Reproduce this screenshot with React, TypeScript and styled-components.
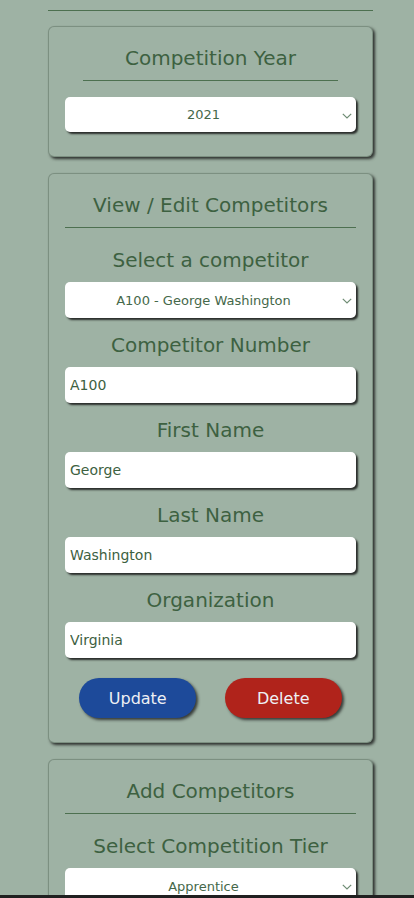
import React from "react";
import styled, { createGlobalStyle } from "styled-components";

const GlobalStyle = createGlobalStyle`
  html, body {
    margin: 0;
    padding: 0;
    background: #9eb2a4;
  }
  body {
    font-family: "DejaVu Sans", "Liberation Sans", sans-serif;
    color: #3d6141;
  }
  * { box-sizing: border-box; }
`;

const Page = styled.div`
  padding: 10px 41px 40px 48px;
`;

const TopRule = styled.div`
  height: 1px;
  background: #4d7050;
`;

const CardStack = styled.div`
  margin-top: 15px;
  display: flex;
  flex-direction: column;
  gap: 16px;
`;

const Card = styled.section`
  display: flex;
  flex-direction: column;
  align-items: stretch;
  padding: 0 16px 24px;
  border: 1px solid rgba(60, 80, 66, 0.35);
  border-radius: 6px;
  box-shadow: 2px 2px 3px rgba(20, 20, 20, 0.8);
  background: #9eb2a4;
`;

const CardTitle = styled.h2<{ $inset?: number }>`
  margin: 19px ${(p) => p.$inset ?? 0}px 16px;
  padding-bottom: 10px;
  border-bottom: 1px solid #4d7050;
  font-weight: 400;
  font-size: 20px;
  line-height: 24px;
  text-align: center;
  color: #3d6141;
`;

const FieldLabel = styled.label`
  display: block;
  margin: 4px 0 10px;
  font-size: 20px;
  line-height: 24px;
  text-align: center;
  color: #3d6141;
`;

const Field = styled.div`
  display: flex;
  flex-direction: column;
  margin-bottom: 11px;
`;

const SelectWrap = styled.div`
  position: relative;
  width: 100%;
`;

const Select = styled.select<{ $h: number }>`
  appearance: none;
  -webkit-appearance: none;
  display: block;
  height: ${(p) => p.$h}px;
  width: 100%;
  border: none;
  border-radius: 5px;
  background: #ffffff;
  box-shadow: 2px 2px 2px rgba(20, 20, 20, 0.85);
  font-family: inherit;
  font-size: 13px;
  color: #45684a;
  text-align: center;
  text-align-last: center;
  padding: 0 14px 0 0;
  outline: none;
`;

const Chevron = styled.svg`
  position: absolute;
  right: 4px;
  top: 50%;
  width: 10px;
  height: 6px;
  margin-top: -2px;
  pointer-events: none;
`;

const TextInput = styled.input`
  display: block;
  height: 36px;
  width: 100%;
  border: none;
  border-radius: 5px;
  background: #ffffff;
  box-shadow: 2px 2px 2px rgba(20, 20, 20, 0.85);
  font-family: inherit;
  font-size: 14px;
  color: #3d6141;
  padding: 0 5px;
  outline: none;
`;

const ButtonRow = styled.div`
  display: flex;
  justify-content: space-around;
  margin-top: 9px;
`;

const PillButton = styled.button<{ $tone: "blue" | "red" }>`
  width: 117px;
  height: 40px;
  border: none;
  border-radius: 20px;
  background: ${(p) => (p.$tone === "blue" ? "#1d4a9a" : "#b0231b")};
  color: #eef0f4;
  font-family: inherit;
  font-size: 16px;
  box-shadow: 2px 2px 3px rgba(20, 20, 20, 0.75);
  cursor: pointer;
`;

const BottomBar = styled.div`
  position: fixed;
  left: 0;
  right: 0;
  bottom: 0;
  height: 3px;
  background: #202020;
`;

const fields = [
  { label: "Competitor Number", value: "A100" },
  { label: "First Name", value: "George" },
  { label: "Last Name", value: "Washington" },
  { label: "Organization", value: "Virginia" },
];

function Dropdown({
  value,
  options,
  height = 36,
}: {
  value: string;
  options: string[];
  height?: number;
}) {
  return (
    <SelectWrap>
      <Select defaultValue={value} $h={height}>
        {options.map((o) => (
          <option key={o} value={o}>
            {o}
          </option>
        ))}
      </Select>
      <Chevron viewBox="0 0 10 6" aria-hidden="true">
        <path d="M0.8 0.8 L5 5 L9.2 0.8" fill="none" stroke="#6f8c74" strokeWidth="1.2" />
      </Chevron>
    </SelectWrap>
  );
}

export default function App() {
  return (
    <>
      <GlobalStyle />
      <Page>
        <TopRule />
        <CardStack>
          <Card>
            <CardTitle $inset={18}>Competition Year</CardTitle>
            <Dropdown value="2021" options={["2021", "2022"]} height={35} />
          </Card>

          <Card>
            <CardTitle>View / Edit Competitors</CardTitle>
            <Field>
              <FieldLabel>Select a competitor</FieldLabel>
              <Dropdown value="A100 - George Washington" options={["A100 - George Washington"]} />
            </Field>
            {fields.map((f) => (
              <Field key={f.label}>
                <FieldLabel>{f.label}</FieldLabel>
                <TextInput defaultValue={f.value} />
              </Field>
            ))}
            <ButtonRow>
              <PillButton $tone="blue">Update</PillButton>
              <PillButton $tone="red">Delete</PillButton>
            </ButtonRow>
          </Card>

          <Card>
            <CardTitle>Add Competitors</CardTitle>
            <Field>
              <FieldLabel>Select Competition Tier</FieldLabel>
              <Dropdown value="Apprentice" options={["Apprentice", "Journeyman", "Master"]} />
            </Field>
          </Card>
        </CardStack>
      </Page>
      <BottomBar />
    </>
  );
}
